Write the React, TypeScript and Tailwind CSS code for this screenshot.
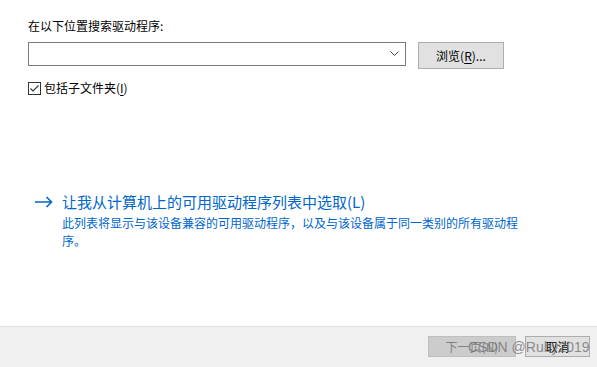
import React from "react";

export default function App() {
  const font = { fontFamily: '"Noto Sans CJK SC", "Noto Sans", sans-serif' };
  return (
    <div
      className="relative w-[597px] h-[367px] flex flex-col bg-white text-black overflow-hidden"
      style={font}
    >
      <div className="flex-1 flex flex-col pl-[28px] pt-[18px]">
        <div className="text-[12px] leading-[16px] h-[16px]">在以下位置搜索驱动程序:</div>
        <div className="flex items-start mt-[8px]">
          <div className="w-[378px] h-[24px] border border-[#7a7a7a] bg-white flex items-center justify-end pr-[6px]">
            <svg width="9" height="6" viewBox="0 0 9 6">
              <path d="M0.5 0.5 L4.5 4.5 L8.5 0.5" fill="none" stroke="#444" strokeWidth="1" />
            </svg>
          </div>
          <button className="ml-[12px] w-[86px] h-[27px] border border-[#adadad] bg-[#e1e1e1] text-[12px] leading-[16px] flex items-center justify-center">
            浏览(<span className="underline underline-offset-2">R</span>)...
          </button>
        </div>
        <div className="flex items-center mt-[12px] h-[14px]">
          <svg width="13" height="13" viewBox="0 0 13 13">
            <rect x="0.5" y="0.5" width="12" height="12" fill="#fff" stroke="#333" />
            <path d="M2.5 6.5 L5 9 L10.5 3.5" fill="none" stroke="#333" strokeWidth="1.1" />
          </svg>
          <span className="ml-[3px] text-[12px] leading-[16px]">
            包括子文件夹(<span className="underline underline-offset-2">I</span>)
          </span>
        </div>
        <div className="mt-[97px] flex items-start">
          <div className="w-[34px] h-[20px] flex items-center pl-[7px]">
            <svg width="18" height="12" viewBox="0 0 18 12">
              <path d="M0 6 L16.5 6 M11.5 1 L16.5 6 L11.5 11" fill="none" stroke="#0066cc" strokeWidth="1.6" />
            </svg>
          </div>
          <div className="flex flex-col">
            <div className="text-[15px] leading-[20px] text-[#0066cc]">
              让我从计算机上的可用驱动程序列表中选取(L)
            </div>
            <div className="mt-[2px] text-[12px] leading-[18px] text-[#0066cc]">
              此列表将显示与该设备兼容的可用驱动程序，以及与该设备属于同一类别的所有驱动程
              <br />
              序。
            </div>
          </div>
        </div>
      </div>
      <div className="h-[41px] bg-[#f0f0f0] border-t border-[#dfdfdf] flex items-start justify-end pt-[9px] pr-[7px] gap-[9px]">
        <button className="w-[88px] h-[21px] border border-[#bfbfbf] bg-[#cccccc] text-[#838383] text-[12px] leading-[16px] flex items-center justify-center">
          下一页(N)
        </button>
        <button className="w-[65px] h-[21px] border border-[#adadad] bg-[#e1e1e1] text-[12px] leading-[16px] flex items-center justify-center">
          取消
        </button>
      </div>
      <div
        className="absolute left-[468px] top-[338px] text-[14px] leading-[18px] text-[#6e6e6e] opacity-75 whitespace-nowrap pointer-events-none"
        style={{ fontFamily: '"Liberation Sans", Arial, sans-serif' }}
      >
        CSDN @Ruby2019
      </div>
    </div>
  );
}
